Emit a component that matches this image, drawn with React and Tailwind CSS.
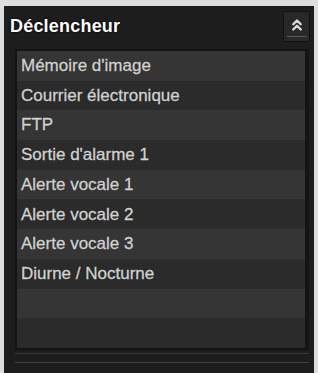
import { ChevronsUp } from "lucide-react";

const triggers = [
  "Mémoire d'image",
  "Courrier électronique",
  "FTP",
  "Sortie d'alarme 1",
  "Alerte vocale 1",
  "Alerte vocale 2",
  "Alerte vocale 3",
  "Diurne / Nocturne",
  "",
  "",
];

export default function App() {
  return (
    <div className="w-[318px] h-[373px] overflow-hidden bg-[#dedede] pl-[4px] pr-[4px] pt-[6px] font-['Liberation_Sans',Arial,sans-serif]">
      <div className="h-full bg-[#1d1d1d] flex flex-col">
        <div className="h-[41px] shrink-0 flex items-center justify-between pl-[6px] pr-[4px]">
          <h3 className="text-[18px] font-bold text-white tracking-[0.2px] [text-shadow:0_0_2px_#000,0_0_1px_#000]">
            Déclencheur
          </h3>
          <button className="w-[27px] h-[31px] flex flex-col items-center justify-center rounded-[2px] bg-[#282828] border border-[#111]">
            <ChevronsUp className="h-[18px] w-[18px] text-[#dadada]" strokeWidth={3.2} />
            <span className="mt-[2px] h-px w-[20px] bg-[#5a5a5a]" />
          </button>
        </div>

        <div className="ml-[11px] mr-[5px] mt-[2px] border-2 border-[#141414] border-r-[4px] bg-[#2c2c2c]">
          {triggers.map((label, i) => (
            <div
              key={i}
              className={`h-[29.7px] flex items-center pl-[4px] text-[17px] text-[#d2d2d2] [-webkit-text-stroke:0.35px_#d2d2d2] [text-shadow:0_0_1px_#000] ${
                i % 2 === 0 ? "bg-[#353535]" : "bg-[#2b2b2b]"
              }`}
            >
              {label}
            </div>
          ))}
        </div>

        <div className="ml-[11px] mr-[5px] mt-[3px] h-px bg-[#3a3a3a]" />
        <div className="ml-[11px] mr-[5px] mt-[8px] h-px bg-[#444]" />
        <div className="flex-1 bg-[#1d1d1d]" />
      </div>
    </div>
  );
}
